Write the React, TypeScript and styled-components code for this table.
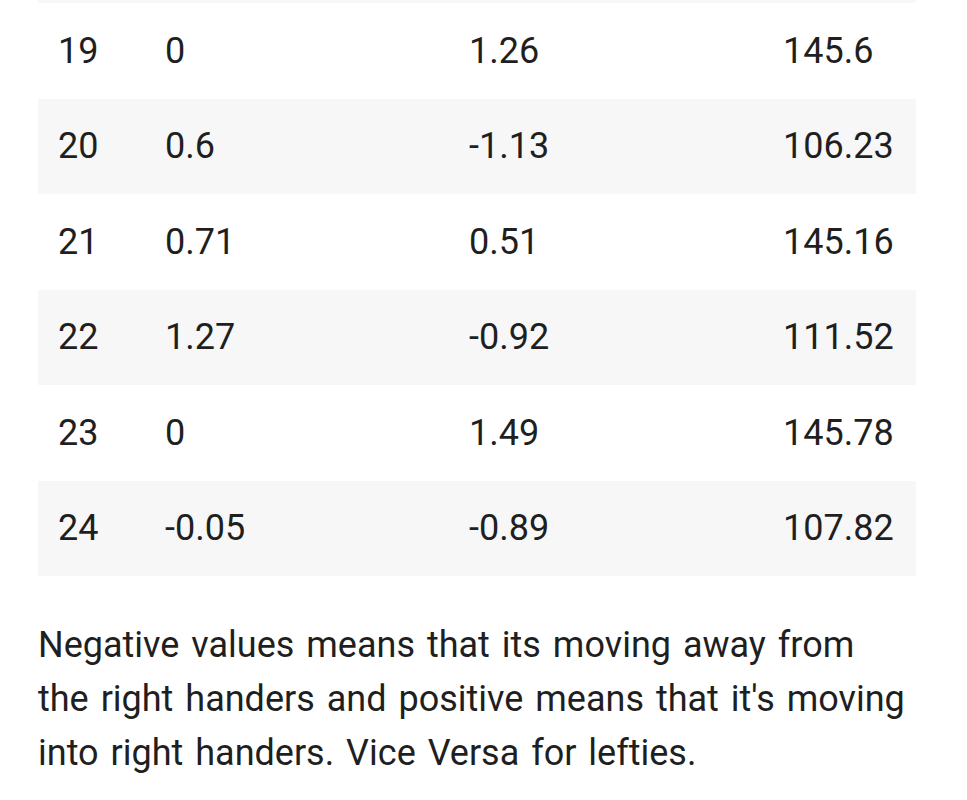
import React from "react";
import styled, { createGlobalStyle } from "styled-components";

const GlobalStyle = createGlobalStyle`
  html, body {
    margin: 0;
    padding: 0;
    background: #ffffff;
  }
  body {
    font-family: Roboto, "Noto Sans", "Liberation Sans", sans-serif;
    color: #1f1f1f;
    -webkit-font-smoothing: antialiased;
  }
`;

const Page = styled.main`
  padding: 0 51px 0 38px;
  display: flex;
  flex-direction: column;
`;

const Table = styled.div`
  display: flex;
  flex-direction: column;
`;

const TableEdge = styled.div`
  height: 3px;
  background: #f7f7f7;
`;

const Row = styled.div<{ $shaded: boolean }>`
  display: grid;
  grid-template-columns: 107px 304px 314px 1fr;
  align-items: center;
  height: 95.5px;
  background: ${(p) => (p.$shaded ? "#f7f7f7" : "#ffffff")};
`;

const Cell = styled.div`
  padding-left: 20px;
  font-size: 36px;
  line-height: 1;
  color: #1f1f1f;
  white-space: nowrap;
`;

const Note = styled.p`
  margin: 42px 0 0;
  font-size: 36px;
  line-height: 54px;
  word-spacing: 3px;
  color: #1f1f1f;
`;

const rows: [string, string, string, string][] = [
  ["19", "0", "1.26", "145.6"],
  ["20", "0.6", "-1.13", "106.23"],
  ["21", "0.71", "0.51", "145.16"],
  ["22", "1.27", "-0.92", "111.52"],
  ["23", "0", "1.49", "145.78"],
  ["24", "-0.05", "-0.89", "107.82"],
];

export default function App() {
  return (
    <>
      <GlobalStyle />
      <Page>
        <Table>
          <TableEdge />
          {rows.map((r, i) => (
            <Row key={r[0]} $shaded={i % 2 === 1}>
              {r.map((c, j) => (
                <Cell key={j}>{c}</Cell>
              ))}
            </Row>
          ))}
        </Table>
        <Note>
          Negative values means that its moving away from the right handers and
          positive means that it's moving into right handers. Vice Versa for
          lefties.
        </Note>
      </Page>
    </>
  );
}
